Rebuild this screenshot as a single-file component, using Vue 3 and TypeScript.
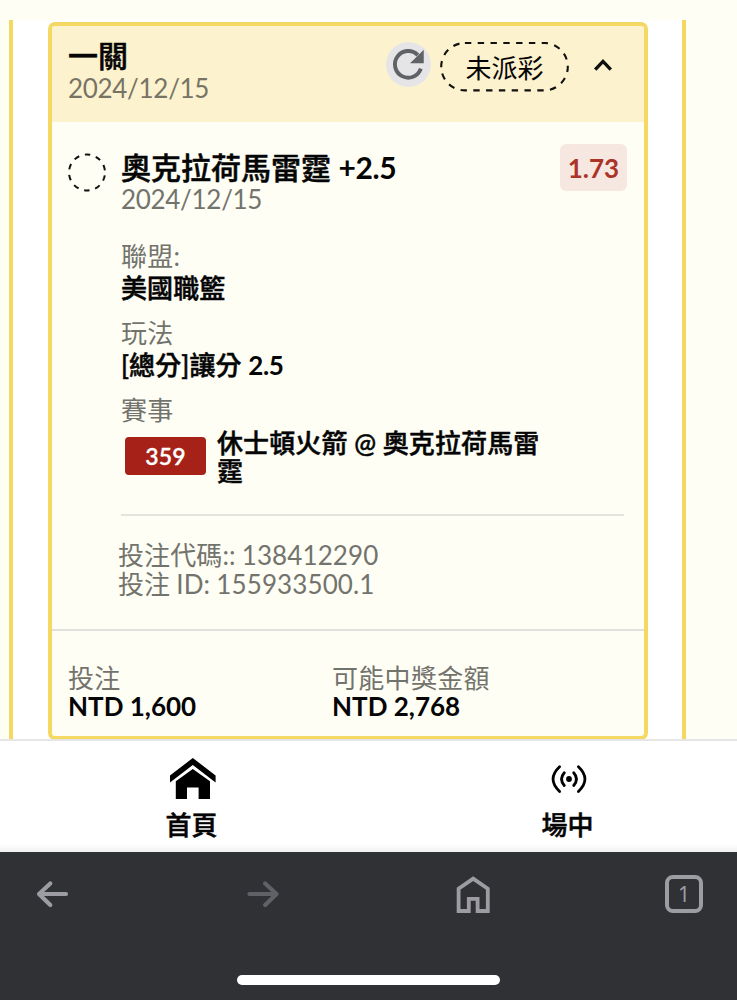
<script setup lang="ts">
interface Detail {
  label: string
  value: string
  figure?: string
}

const bet = {
  type: '一關',
  date: '2024/12/15',
  status: '未派彩',
  pick: '奧克拉荷馬雷霆',
  line: '+2.5',
  pickDate: '2024/12/15',
  odds: '1.73',
  matchNo: '359',
  match: '休士頓火箭 @ 奧克拉荷馬雷霆',
}

const details: Detail[] = [
  { label: '聯盟:', value: '美國職籃' },
  { label: '玩法', value: '[總分]讓分', figure: '2.5' },
]

const codes: string[] = ['投注代碼:: 138412290', '投注 ID: 155933500.1']

const totals: Detail[] = [
  { label: '投注', value: 'NTD 1,600' },
  { label: '可能中獎金額', value: 'NTD 2,768' },
]
</script>

<template>
  <div class="screen" lang="zh-TW">
    <main class="content">
      <section class="panel">
        <article class="card">
          <header class="card-head">
            <div class="head-text">
              <h2 class="title">{{ bet.type }}</h2>
              <p class="date">{{ bet.date }}</p>
            </div>
            <button class="refresh" aria-label="refresh">
              <svg width="45" height="45" viewBox="0 0 46 46">
                <path d="M35.6 27.2A13.6 13.6 0 1 1 32.5 13.4" fill="none" stroke="#606266" stroke-width="4" />
                <path d="M38.6 7.8V21.8H24.6Z" fill="#606266" />
              </svg>
            </button>
            <div class="status">
              <svg class="outline" width="129" height="50" viewBox="0 0 129 50">
                <rect x="1.2" y="1" width="126.6" height="47.4" rx="23.7" fill="none" stroke="#111" stroke-width="2.1" stroke-dasharray="6.4 6.4" />
              </svg>
              <span>{{ bet.status }}</span>
            </div>
            <svg class="chevron" width="20" height="14" viewBox="0 0 20 14">
              <path d="M2.2 11.6 10 3.4 17.8 11.6" fill="none" stroke="#111" stroke-width="3.4" />
            </svg>
          </header>

          <div class="leg">
            <svg class="pending" width="40" height="40" viewBox="0 0 40 40">
              <circle cx="20" cy="20.5" r="18" fill="none" stroke="#111" stroke-width="2" stroke-dasharray="5.5 5.81" stroke-dashoffset="-2.9" />
            </svg>
            <div class="leg-body">
              <div class="pick-row">
                <div>
                  <h3 class="title">{{ bet.pick }} <span class="figure">{{ bet.line }}</span></h3>
                  <p class="date">{{ bet.pickDate }}</p>
                </div>
                <span class="odds">{{ bet.odds }}</span>
              </div>
              <dl class="details">
                <div v-for="d in details" :key="d.label" class="detail">
                  <dt>{{ d.label }}</dt>
                  <dd>{{ d.value }} <span v-if="d.figure" class="figure">{{ d.figure }}</span></dd>
                </div>
                <div class="detail">
                  <dt>賽事</dt>
                  <dd class="match">
                    <span class="match-no">{{ bet.matchNo }}</span>
                    <span class="match-name">{{ bet.match }}</span>
                  </dd>
                </div>
              </dl>
              <div class="codes">
                <p v-for="c in codes" :key="c">{{ c }}</p>
              </div>
            </div>
          </div>

          <footer class="totals">
            <div v-for="t in totals" :key="t.label" class="total">
              <span class="total-label">{{ t.label }}</span>
              <span class="total-value">{{ t.value }}</span>
            </div>
          </footer>
        </article>
      </section>
    </main>

    <nav class="tabs">
      <a class="tab">
        <svg width="46" height="42" viewBox="0 0 46 42">
          <path d="M0 17.5 22.8 0 45.6 17.5V24.5L22.8 7 0 24.5Z" />
          <path d="M5.8 23.2 22.8 11 40 23.2V41H28.6V29.4H17V41H5.8Z" />
        </svg>
        <span>首頁</span>
      </a>
      <a class="tab live">
        <svg width="46" height="42" viewBox="0 0 46 42" fill="none" stroke="#000" stroke-width="2.8" stroke-linecap="round">
          <circle cx="23" cy="21" r="2.9" fill="#000" stroke="none" />
          <path d="M18.3 14.7Q12.7 21 18.3 27.5M27.7 14.7Q33.3 21 27.7 27.5M13.6 8.8Q0.5 21 13.6 33.5M32.4 8.8Q45.5 21 32.4 33.5" />
        </svg>
        <span>場中</span>
      </a>
    </nav>

    <div class="browser-bar">
      <div class="browser-icons">
        <svg width="40" height="40" viewBox="0 0 40 40" fill="none" stroke="#9c9ca2" stroke-width="4.2" stroke-linecap="round" stroke-linejoin="round">
          <path d="M34 20H7M18.3 9.5 7 20 18.3 31" />
        </svg>
        <svg width="40" height="40" viewBox="0 0 40 40" fill="none" stroke="#606166" stroke-width="4.2" stroke-linecap="round" stroke-linejoin="round">
          <path d="M6.5 20H33.5M22.2 9.5 33.5 20 22.2 31" />
        </svg>
        <svg width="40" height="40" viewBox="0 0 40 40" fill="none" stroke="#9c9ca2" stroke-width="3.8">
          <path d="M4.6 37V14.7L19.2 4.6 33.8 14.7V37H23.6V24.8H14.8V37Z" />
        </svg>
        <div class="page-count">1</div>
      </div>
      <div class="home-indicator"></div>
    </div>
  </div>
</template>

<style>
body {
  margin: 0;
  background: #fefef5;
}
</style>

<style scoped>
.screen {
  width: 737px;
  height: 1000px;
  overflow: hidden;
  display: flex;
  flex-direction: column;
  background: #fefef5;
  color: #050505;
  font-family: Lato, "Noto Sans CJK TC", sans-serif;
  font-size: 26px;
  line-height: 28px;
}
.screen * { box-sizing: border-box; }
h2, h3, p, dl, dd { margin: 0; }
.content {
  height: 739px;
  padding: 20px 0 0 9px;
}
.panel {
  width: 677px;
  height: 720px;
  padding: 2px 34px 0 35px;
  border: solid #f5d862;
  border-width: 0 4px;
  background: #fff;
}
.card {
  width: 600px;
  height: 718px;
  border: 4px solid #f5d862;
  border-radius: 7px;
  background: #fefef5;
  overflow: hidden;
  display: flex;
  flex-direction: column;
}
.card-head {
  height: 96px;
  flex: none;
  display: flex;
  align-items: flex-start;
  padding: 13px 31px 0 16px;
  background: #fdf2ce;
}
.head-text { flex: 1; }
.title {
  font-size: 30px;
  font-weight: 500;
  line-height: 32px;
  white-space: nowrap;
  -webkit-text-stroke: 0.5px currentColor;
}
.figure {
  font-weight: 700;
  letter-spacing: -0.4px;
  -webkit-text-stroke: 0;
}
.date {
  line-height: 34px;
  color: #777466;
  letter-spacing: -0.3px;
}
.leg .date {
  line-height: 32px;
  color: #73736d;
}
.refresh {
  width: 45px;
  height: 45px;
  margin: 3px 9px 0 0;
  padding: 0;
  border: 0;
  border-radius: 50%;
  background: #e5e5e7;
}
.refresh svg { display: block; }
.status {
  position: relative;
  width: 129px;
  height: 50px;
  margin-top: 3px;
  padding-top: 2px;
  display: flex;
  align-items: center;
  justify-content: center;
}
.outline {
  position: absolute;
  inset: 0;
}
.chevron { margin: 19px 0 0 24px; }
.leg {
  height: 507px;
  flex: none;
  display: flex;
  padding: 22px 17px 0 15px;
}
.pending {
  flex: none;
  margin: 8px 14px 0 0;
}
.leg-body { flex: 1; }
.pick-row {
  display: flex;
  justify-content: space-between;
  align-items: flex-start;
}
.pick-row .title { margin-top: 7px; }
.odds {
  width: 67px;
  height: 47px;
  border-radius: 6px;
  background: #f6e8e1;
  color: #ab3429;
  font-weight: 700;
  line-height: 48px;
  text-align: center;
}
.details {
  height: 301px;
  width: 503px;
  padding-top: 26px;
  border-bottom: 2px solid #e4e4dc;
}
.detail { height: 77px; }
dt {
  line-height: 30px;
  color: #73736d;
  letter-spacing: 0.2px;
}
dd {
  font-weight: 500;
  line-height: 34px;
  letter-spacing: 0.1px;
  -webkit-text-stroke: 0.5px currentColor;
}
.match {
  display: flex;
  align-items: center;
  gap: 11px;
  margin-top: 4px;
}
.match-no {
  width: 81px;
  height: 38px;
  flex: none;
  margin: 0 0 2px 4px;
  border-radius: 4px;
  background: #a62117;
  color: #fff;
  font-size: 23px;
  font-weight: 600;
  line-height: 39px;
  text-align: center;
  -webkit-text-stroke: 0.3px currentColor;
}
.match-name {
  width: 340px;
  line-height: 28px;
}
.codes {
  padding: 25px 0 0;
  margin-left: -3px;
  color: #73736d;
  letter-spacing: 0.1px;
  word-spacing: -0.6px;
}
.codes p { line-height: 28.5px; }
.totals {
  flex: 1;
  display: flex;
  padding: 33px 16px 0;
  border-top: 2px solid #e1e1dc;
}
.total {
  width: 264px;
  display: flex;
  flex-direction: column;
}
.total-label {
  color: #73736d;
  letter-spacing: 0.3px;
}
.total-value { font-weight: 700; }
.tabs {
  height: 113px;
  flex: none;
  display: flex;
  border-top: 2px solid #e5e5e5;
  background: linear-gradient(#fff 103px, #f0f0f0 111px);
}
.tab {
  width: 383px;
  flex: none;
  display: flex;
  flex-direction: column;
  align-items: center;
  padding-top: 17px;
  font-weight: 500;
}
.tab span { -webkit-text-stroke: 0.5px currentColor; }
.tab.live { width: 369px; }
.tab svg {
  display: block;
  margin: 0 0 11px 2px;
}
.browser-bar {
  height: 148px;
  flex: none;
  background: #303135;
}
.browser-icons {
  height: 124px;
  display: flex;
  align-items: flex-start;
  justify-content: space-between;
  padding: 22px 34px 0 32px;
}
.page-count {
  width: 38px;
  height: 38px;
  margin-top: 1px;
  border: 4px solid #9c9ca2;
  border-radius: 8px;
  color: #9c9ca2;
  font-family: "Noto Sans", sans-serif;
  font-size: 21px;
  line-height: 30px;
  text-align: center;
}
.home-indicator {
  width: 263px;
  height: 10px;
  margin: -1px auto 0;
  border-radius: 5px;
  background: #fff;
}
</style>
